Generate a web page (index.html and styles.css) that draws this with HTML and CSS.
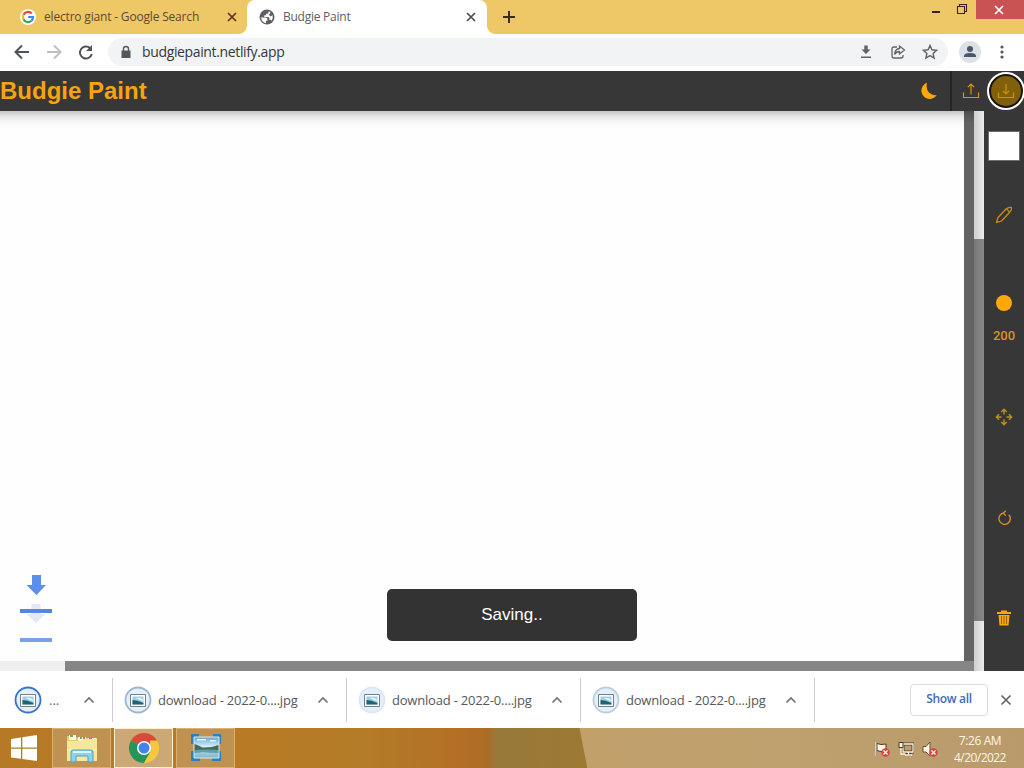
FILE: index.html
```html
<!DOCTYPE html>
<html lang="en">
<head>
<meta charset="utf-8">
<title>Budgie Paint</title>
<link rel="stylesheet" href="styles.css">
</head>
<body>
<svg class="defs" width="0" height="0" aria-hidden="true">
  <defs>
    <linearGradient id="sky" x1="0" y1="0" x2="0" y2="1"><stop offset="0" stop-color="#5ba5d6"/><stop offset=".45" stop-color="#d9eef5"/><stop offset=".55" stop-color="#b8dbe6"/><stop offset="1" stop-color="#79b8d2"/></linearGradient>
    <symbol id="file" viewBox="0 0 28 28">
      <circle cx="14" cy="14" r="12.500" fill="#e3effa" stroke="currentColor" stroke-width="1.800"/>
      <path d="M6.500 8.500h15v12h-15z" fill="#fff" stroke="#777e86"/>
      <path d="M8.500 10.500h11v8h-11z" fill="#9bd1e8"/>
      <path d="M8.500 14q5 0 11 3v1.500h-11z" fill="#25616c"/>
      <path d="M12 12q4-1 7 2v1q-4-1-7-3" fill="#effafa"/>
    </symbol>
    <symbol id="up" viewBox="0 0 12 8"><path d="M1.500 6.500 6 2l4.500 4.500" fill="none" stroke="#707070" stroke-width="1.600"/></symbol>
    <symbol id="cross" viewBox="0 0 12 12"><path d="m2 2 8 8m0-8-8 8" fill="none" stroke="currentColor" stroke-width="1.700"/></symbol>
  </defs>
</svg>
<div class="screen">
  <div class="tabs">
    <div class="tab google">
      <svg class="favicon" viewBox="0 0 16 16"><circle cx="8" cy="8" r="8" fill="#fff"/><g fill="none" stroke-width="2.200"><path d="M11.700 4.500A5 5 0 0 0 3.500 5.800" stroke="#e84335"/><path d="M3.500 5.800a5 5 0 0 0 0 4.400" stroke="#fabb05"/><path d="M3.500 10.200a5 5 0 0 0 7.900 1.600" stroke="#34a853"/><path d="M11.400 11.800A5 5 0 0 0 13 8H8.200" stroke="#4285f4"/></g></svg>
      <span class="title t1">electro giant - Google Search</span>
      <svg class="close" width="12" height="12"><use href="#cross"/></svg>
    </div>
    <div class="tab active">
      <svg class="favicon" viewBox="0 0 16 16"><circle cx="8" cy="8" r="7.500" fill="#5c6064"/><path d="M2 8.500h4.500q2 0 2 2v1.200H7v2.500Q2.500 13 2 8.500M9.500 2.200v1.600q0 1-1.300 1H7v1.500H5.300V8H9q1.300 0 1.300 1.300v1.400h1q1 0 1.300 1.300Q14.500 9.500 13.500 6l-1.800 1.500-2-1.800 1.600-1.500V3z" fill="#fff"/></svg>
      <span class="title t2">Budgie Paint</span>
      <svg class="close" width="12" height="12"><use href="#cross"/></svg>
    </div>
    <svg class="plus" viewBox="0 0 14 14"><path d="M7 1v12M1 7h12" stroke="#3c2924" stroke-width="2"/></svg>
    <div class="windowbtns">
      <svg width="12" height="20" viewBox="0 0 12 20"><path d="M2 12h8" stroke="#432020" stroke-width="2"/></svg>
      <svg width="12" height="20" viewBox="0 0 12 20"><path d="M1.500 6.500h7v7h-7zM3.500 6V4.500h7v7H9" fill="none" stroke="#432020" stroke-width="1.100"/></svg>
      <div class="winclose"><svg width="12" height="12"><use href="#cross"/></svg></div>
    </div>
  </div>
  <div class="toolbar">
    <svg class="nav" viewBox="0 0 96 24"><g fill="none" stroke-width="2"><path d="M29 12H16m6-6.500L15.500 12l6.500 6.500" stroke="#505357"/><path d="M47 12h13m-6-6.500 6.500 6.500-6.500 6.500" stroke="#bdbfc1"/><path d="M90 8a6 6 0 1 0 1.800 6" stroke="#505357"/></g><path d="M92 5v6h-6z" fill="#505357"/></svg>
    <div class="address">
      <svg class="lock" viewBox="0 0 12 14"><path d="M1.500 5.500h9V13h-9z" fill="#54575b"/><path d="M3.500 7V4a2.500 2.500 0 0 1 5 0v3" fill="none" stroke="#54575b" stroke-width="1.400"/></svg>
      <span class="url">budgiepaint.netlify.app</span>
      <div class="address-icons">
        <svg viewBox="0 0 16 16"><path d="M6.300 1.500h3.400v4h2.800L8 10 3.500 5.500h2.800zM3 12.500h10V14H3z" fill="#5f6368"/></svg>
        <svg viewBox="0 0 16 16"><path d="M7 3H4Q2 3 2 5v7q0 2 2 2h7q2 0 2-2v-1" fill="none" stroke="#5f6368" stroke-width="1.300"/><path d="M9.500 2v2.500Q5 5 4.500 10.500q2-3 5-3V10l5-4z" fill="none" stroke="#5f6368" stroke-width="1.300"/></svg>
        <svg viewBox="0 0 16 16"><path d="m8 1.500 1.900 4.300 4.700.5-3.500 3.100 1 4.600L8 11.600 3.900 14l1-4.600-3.500-3.100 4.700-.5z" fill="none" stroke="#5f6368" stroke-width="1.400"/></svg>
      </div>
    </div>
    <svg class="profile" viewBox="0 0 22 22"><circle cx="11" cy="11" r="11" fill="#dce1e8"/><circle cx="11" cy="8" r="3" fill="#4a566a"/><path d="M5 16v-1q0-3 6-3t6 3v1z" fill="#4a566a"/></svg>
    <svg class="more" viewBox="0 0 4 16"><g fill="#55585c"><circle cx="2" cy="3" r="1.600"/><circle cx="2" cy="8" r="1.600"/><circle cx="2" cy="13" r="1.600"/></g></svg>
  </div>
  <header class="paint-header">
    <h1>Budgie Paint</h1>
    <svg class="moon" viewBox="0 0 18 18"><path d="M7 .8A8.300 8.300 0 1 0 16.800 13Q12.500 13.800 9.200 10.800 5.500 7 7 .8z" fill="#ffa70b"/></svg>
    <div class="file-actions">
      <svg class="upload" viewBox="0 0 18 18"><path d="M1.500 10.500v5h15v-5M9 12.500V2M5.800 5.200 9 2l3.200 3.200" fill="none" stroke="#d8960f" stroke-width="1.200"/></svg>
      <div class="download"><svg viewBox="0 0 18 18"><path d="M1.500 10.500v5h15v-5M9 2v10M5.800 8.800 9 12l3.200-3.200" fill="none" stroke="#c9930d" stroke-width="1.200"/></svg></div>
    </div>
  </header>
  <main class="workspace">
    <div class="viewport">
      <div class="canvas-row">
        <div class="canvas">
          <svg class="saving-arrow" viewBox="0 0 32 70"><path d="M11.500 29h9v10h5L16 48 6.500 39h5z" fill="#e6e8f5"/><path d="M12 0h9v10h5L16.500 20 6.500 10H12z" fill="#5a8fee"/><path d="M0 34h32v4H0z" fill="#5089df"/><path d="M0 63h32v4H0z" fill="#7da0eb"/></svg>
          <div class="toast">Saving..</div>
        </div>
        <div class="canvas-edge"></div>
      </div>
      <div class="hscroll"><div class="hthumb"></div></div>
    </div>
    <div class="vscroll"><div class="vthumb"></div></div>
    <aside class="tools">
      <div class="swatch"></div>
      <svg class="pencil" viewBox="0 0 18 18"><path d="M1.500 16.500 3 11.500 11.500 2.500Q15 1 16.500 1.500 17 4 14.500 6.500L6.500 15zM11.500 2.500l3 4" fill="none" stroke="#d0900e" stroke-width="1.200" stroke-linejoin="round"/></svg>
      <div class="brush"></div>
      <span class="size">200</span>
      <svg class="move" viewBox="0 0 18 18"><path d="M9 1.500v5M9 11.500v5M1.500 9h5m5 0h5M6.300 4 9 1.300 11.700 4M6.300 14 9 16.700l2.700-2.700M4 6.300 1.300 9 4 11.700M14 6.300 16.700 9 14 11.700" fill="none" stroke="#bd921f" stroke-width="1.400"/></svg>
      <svg class="rotate" viewBox="0 0 16 16"><path d="M7 3.200A5.700 5.700 0 1 0 12.800 4.800M9.800 .8 7.200 3.200 9.800 5.400" fill="none" stroke="#dc931e" stroke-width="1.300"/></svg>
      <svg class="trash" viewBox="0 0 16 16"><path d="M1 2h4V.5h6V2h4v2H1zM2.500 5h11l-1 10.500h-9z" fill="#ffa60a"/><path d="M5.500 6v8M8 6v8m2.500-8v8" stroke="#8a5b10" stroke-width=".9"/></svg>
    </aside>
  </main>
  <div class="downloads">
    <div class="item first"><svg class="file f1"><use href="#file"/></svg><span class="dots">...</span><svg class="chev"><use href="#up"/></svg></div>
    <div class="item"><svg class="file f2"><use href="#file"/></svg><span class="name">download - 2022-0....jpg</span><svg class="chev"><use href="#up"/></svg></div>
    <div class="item"><svg class="file f3"><use href="#file"/></svg><span class="name">download - 2022-0....jpg</span><svg class="chev"><use href="#up"/></svg></div>
    <div class="item"><svg class="file f4"><use href="#file"/></svg><span class="name">download - 2022-0....jpg</span><svg class="chev"><use href="#up"/></svg></div>
    <button class="show-all">Show all</button>
    <svg class="shelf-close" viewBox="0 0 12 12"><path d="m1.500 1.500 9 9m0-9-9 9" stroke="#666" stroke-width="1.700"/></svg>
  </div>
  <div class="taskbar">
    <svg class="start" viewBox="0 0 28 28"><path d="m1 5 10-1.500v10H1zM12.300 3.300 27 1v12.500H12.300zM1 14.800h10v10L1 23.500zM12.300 14.800H27V27l-14.700-2.100z" fill="#fff"/></svg>
    <div class="task"><svg viewBox="0 0 36 32"><path d="M3 4h8l2 2h20v22H3z" fill="#e8ca70"/><path d="M5 3h7v5H5zM14 5h8v4h-8zM24 6h8v3h-8z" fill="#fffbe6"/><path d="M6 4h3M16 6h2" stroke="#3a9b38" stroke-width="1.500"/><path d="M19 6h2M25 7h3" stroke="#c63b35" stroke-width="1.500"/><path d="M3 9h14l2-2h14v22H3z" fill="#f7e79b"/><path d="M3 18h30" stroke="#fff6c4"/><path d="M7 30V20q0-2 2-2h18q2 0 2 2v10h-5v-6H12v6z" fill="#8fd2ef" stroke="#4fa0cc"/><path d="M9 20h18" stroke="#dcf8ff" stroke-width="2"/></svg></div>
    <div class="task current"><svg viewBox="0 0 32 32"><path d="M16 16 3 8.500a15 15 0 0 1 26 0z" fill="#d94a3a"/><path d="M3 8.500A15 15 0 0 0 16 31l6.500-11.300L16 16z" fill="#27945a"/><path d="M29 8.500A15 15 0 0 1 16 31l6.500-11.300L22 8.500z" fill="#f7c83b"/><circle cx="16" cy="16" r="7" fill="#fff"/><circle cx="16" cy="16" r="5.500" fill="#4383ee"/></svg></div>
    <div class="task"><svg viewBox="0 0 36 32"><path d="M3 2h8v6H9v4H3zM25 2h8v10h-5V8h-3zM3 19h6v4h3v6H3zM28 19h5v10h-9v-6h4z" fill="#2f7fb8"/><path d="M6 5h25v21H6z" fill="url(#sky)" stroke="#dcebef"/><path d="M6.500 12q4 1 8 3.500 8 .5 16-2.500v5q-12 1-24 1z" fill="#3d6e62"/><path d="M6.500 18q12-1 24 0v3q-9 0-16-1-4 1-8 1z" fill="#6a9ca6"/><path d="M9 7h9v1.500H9zM22 8h6v1.500h-6z" fill="#eaf7fb"/></svg></div>
    <div class="tray">
      <svg viewBox="0 0 16 16"><path d="M2.500 1v14M3 2.500l4 1 5-.5v7l-5 .5-4-1z" fill="#fff7df" stroke="#47382a"/><path d="M2 1v14" stroke="#fff7df"/><circle cx="11.500" cy="11.500" r="4.200" fill="#d7443d"/><path d="m9.500 9.500 4 4m0-4-4 4" stroke="#fff" stroke-width="1.300"/></svg>
      <svg viewBox="0 0 16 16"><path d="M5 3h10v8H5zM8 13.500h5" fill="none" stroke="#483c2c" stroke-width="3"/><path d="M5 3h10v8H5zM7 14h7M10.500 11v3M3 5v8h4" fill="none" stroke="#fff6df" stroke-width="1.300"/><path d="M1 1.500h4v5H1z" fill="#fff6df" stroke="#4c3b2a"/></svg>
      <svg viewBox="0 0 16 16"><path d="M1 5.500h3L8 1v14l-4-4H1z" fill="#fff7df" stroke="#65513b"/><circle cx="11.500" cy="11.500" r="4.200" fill="#d7443d"/><path d="m9.500 9.500 4 4m0-4-4 4" stroke="#fff" stroke-width="1.300"/></svg>
    </div>
    <div class="clock"><span class="time">7:26 AM</span><span class="date">4/20/2022</span></div>
  </div>
</div>
</body>
</html>
```
FILE: styles.css
```css
* { box-sizing: border-box; }
body { margin: 0; overflow: hidden; font-family: "Open Sans", "Noto Sans", sans-serif; }
svg { display: block; flex: none; }
.defs { position: absolute; }
.screen { width: 1024px; height: 768px; display: flex; flex-direction: column; }
.tabs { height: 34px; display: flex; background: #eec866; flex: none; }
.tab { display: flex; align-items: center; height: 34px; color: #5b4b2d; font-size: 12px; }
.google { width: 247px; padding-left: 20px; background: #eec866; position: relative; z-index: 1; }
.active { width: 240px; background: #fff; border-radius: 8px 8px 0 0; padding-left: 12px; color: #5b5e63; position: relative; }
.active::after { content: ""; position: absolute; width: 8px; height: 8px; bottom: 0; right: -8px; background: radial-gradient(circle at 100% 0, transparent 7.500px, #fff 8px); }
.google::after { content: ""; position: absolute; right: 0; bottom: 0; width: 8px; height: 8px; background: radial-gradient(circle at 0 0, #eec866 7.500px, #fff 8px); }
.favicon { width: 16px; height: 16px; margin-right: 8px; }
.title { white-space: nowrap; line-height: 18px; }
.t1 { letter-spacing: -.18px; }
.t2 { letter-spacing: -.25px; }
.close { margin-left: auto; margin-right: 9px; color: #5a3227; }
.active .close { margin-right: 10px; color: #4d4e50; }
.plus { width: 14px; height: 14px; margin: 10px 0 0 15px; }
.windowbtns { display: flex; margin-left: auto; gap: 14px; }
.windowbtns > svg:nth-child(2) { margin-right: -6px; }
.winclose { width: 48px; height: 19px; background: #c85352; color: #fff; display: flex; align-items: center; justify-content: center; padding-right: 2px; }
.toolbar { height: 37px; flex: none; display: flex; align-items: center; background: #fff; padding: 0 20px 2px 0; }
.nav { width: 96px; height: 24px; margin-right: 12px; }
.address { width: 840px; height: 28px; border-radius: 14px; background: #f1f3f5; display: flex; align-items: center; padding-left: 12px; }
.lock { width: 12px; height: 14px; margin-right: 10px; }
.url { color: #34373b; font-size: 14px; letter-spacing: -.36px; }
.address-icons { display: flex; gap: 16px; margin-left: auto; padding-right: 10px; }
.address-icons svg { width: 16px; height: 16px; }
.profile { width: 22px; height: 22px; margin-left: 11px; }
.more { width: 4px; height: 16px; margin-left: 19px; }
.paint-header { height: 40px; flex: none; display: flex; align-items: center; background: #373737; z-index: 2; }
h1 { margin: 0; color: #f8a310; font: bold 24px/40px "Liberation Sans", Arial, sans-serif; }
.moon { width: 18px; height: 18px; margin-left: auto; margin-right: 12px; }
.file-actions { width: 74px; height: 40px; border-left: 2px solid #252525; display: flex; align-items: center; padding-left: 10px; }
.upload { width: 18px; height: 18px; margin-right: 7px; flex: none; }
.download { width: 38px; height: 38px; border: 2px solid #fff; border-radius: 50%; background: #80600a; box-shadow: inset 0 0 0 2px #151515; display: flex; align-items: center; justify-content: center; flex: none; }
.download svg { width: 18px; height: 18px; }
.workspace { height: 560px; flex: none; display: flex; }
.viewport { width: 974px; display: flex; flex-direction: column; }
.canvas-row { height: 550px; display: flex; }
.canvas { width: 964px; background: linear-gradient(#c6c6c6, #e8e8e8 6px, #fafafa 12px, #fefefe 17px); position: relative; }
.canvas-edge { width: 10px; background: linear-gradient(#4c4c4c, #636363 12px); }
.hscroll { height: 10px; padding-left: 65px; background: #efefef; }
.hthumb { height: 10px; background: #868686; }
.vscroll { width: 10px; background: linear-gradient(90deg, #cfcfcf, #ececec); padding-top: 128px; }
.vthumb { height: 382px; background: linear-gradient(90deg, #777, #888); }
.tools { width: 40px; background: #373737; display: flex; flex-direction: column; align-items: center; }
.swatch { width: 32px; height: 30px; margin-top: 20px; border: 1px solid #6d6d6d; background: #fff; }
.pencil { width: 18px; height: 18px; margin-top: 45px; }
.brush { width: 16px; height: 16px; border-radius: 50%; background: #ffa70a; margin-top: 71px; }
.size { font: 500 13px/18px Roboto, "Open Sans", sans-serif; margin-top: 16px; color: #d49722; }
.move { width: 18px; height: 18px; margin-top: 63px; }
.rotate { width: 16px; height: 16px; margin-top: 84px; }
.trash { width: 16px; height: 16px; margin-top: 84px; }
.toast { position: absolute; left: 387px; top: 478px; width: 250px; height: 52px; border-radius: 5px; background: #333; color: #fff; text-align: center; font: 17px/51px "Liberation Sans", Arial, sans-serif; }
.saving-arrow { position: absolute; left: 20px; top: 464px; width: 32px; height: 70px; }
.downloads { height: 57px; flex: none; display: flex; align-items: center; background: #fff; }
.item { width: 234px; height: 44px; border-right: 1px solid #c9cbd0; display: flex; align-items: center; padding: 0 17px 0 11px; }
.first { width: 113px; padding-left: 14px; }
.file { width: 28px; height: 28px; margin-right: 6px; }
.first .file { margin-right: 7px; }
.f1 { color: #3974cb; }
.f2 { color: #9db5d0; }
.f3 { color: #dce7f2; }
.f4 { color: #bfcede; }
.name { color: #56575a; font-size: 13px; letter-spacing: -.2px; white-space: nowrap; }
.dots { color: #66676a; font-size: 13px; }
.chev { width: 12px; height: 8px; margin-left: auto; }
.show-all { width: 78px; height: 32px; border: 1px solid #d9dce2; border-radius: 4px; background: #fff; color: #3f6abb; font: 600 12px "Open Sans", sans-serif; margin-left: auto; padding: 0 0 2px; letter-spacing: -.3px; }
.shelf-close { width: 12px; height: 12px; margin: 0 12px; }
.taskbar { height: 40px; flex: none; display: flex; align-items: center; background: linear-gradient(79deg, transparent 0 576px, #c1a069 577px, #bfa16f 760px, #b99a6b 100%), linear-gradient(90deg, #b67925 0, #b97a24 230px, #b47c28 360px, #b36e25 470px, #ac6c25 488px, #98793a 496px, #9d7932 590px); }
.start { width: 28px; height: 28px; margin-left: 10px; margin-right: 14px; }
.task { width: 59px; height: 40px; border: 1px solid #d9b172; background: #bf9251; display: flex; align-items: center; justify-content: center; margin-right: 3px; flex: none; }
.task svg { width: 36px; height: 32px; }
.current { border: 1px solid #fff0ce; background: #cba876; }
.tray { display: flex; gap: 8px; margin-left: auto; margin-right: 14px; padding-top: 2px; }
.tray svg { width: 16px; height: 16px; }
.clock { width: 56px; margin-right: 16px; color: #fff6e5; font-size: 12px; line-height: 17px; display: flex; flex-direction: column; align-items: center; white-space: nowrap; padding-top: 1px; }
.time { letter-spacing: -.4px; }
.date { letter-spacing: -.55px; }
```
